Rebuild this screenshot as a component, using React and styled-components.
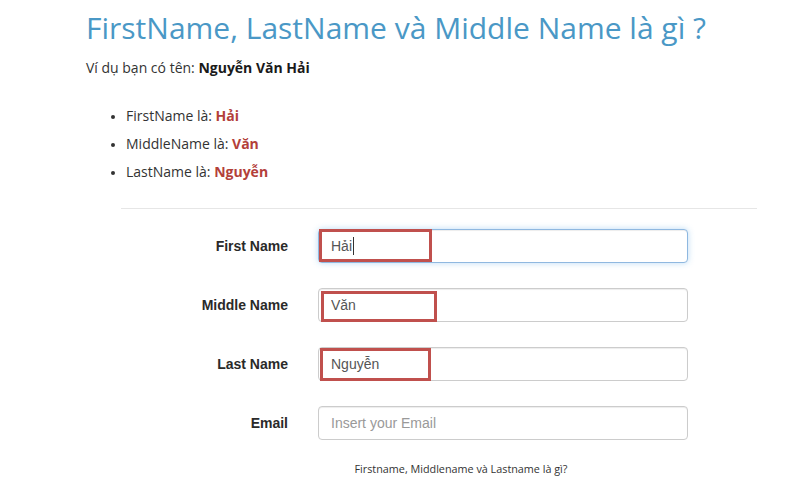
import styled, { createGlobalStyle } from 'styled-components';

const GlobalStyle = createGlobalStyle`
  body {
    margin: 0;
    background: #fff;
    font-family: "Open Sans", "Liberation Sans", sans-serif;
    color: #333;
  }
`;

const fields = [
  { label: 'First Name', value: 'Hải', focused: true, mark: { left: 1, top: 0, width: 113, height: 33 } },
  { label: 'Middle Name', value: 'Văn', mark: { left: 3, top: 3, width: 116, height: 31 } },
  { label: 'Last Name', value: 'Nguyễn', mark: { left: 2, top: 1, width: 111, height: 33 } },
  { label: 'Email', placeholder: 'Insert your Email' }
];

const App = () => {
  return (
    <>
      <GlobalStyle />
      <Page>
        <Title>FirstName, LastName và Middle Name là gì ?</Title>
        <Intro>
          Ví dụ bạn có tên: <strong>Nguyễn Văn Hải</strong>
        </Intro>
        <List>
          <li>FirstName là: <Name>Hải</Name></li>
          <li>MiddleName là: <Name>Văn</Name></li>
          <li>LastName là: <Name>Nguyễn</Name></li>
        </List>
        <Divider />
        <Form>
          {fields.map((f) => (
            <Row key={f.label}>
              <Label>{f.label}</Label>
              <InputWrap>
                <Input
                  $focused={f.focused}
                  defaultValue={f.value}
                  placeholder={f.placeholder}
                  readOnly
                />
                {f.focused && <Caret />}
                {f.mark && (
                  <Mark
                    $left={f.mark.left}
                    $top={f.mark.top}
                    $width={f.mark.width}
                    $height={f.mark.height}
                  />
                )}
              </InputWrap>
            </Row>
          ))}
        </Form>
        <Caption>Firstname, Middlename và Lastname là gì?</Caption>
      </Page>
    </>
  );
};

export default App;

const Page = styled.div`
  width: 800px;
  height: 485px;
  overflow: hidden;
  padding: 10px 0 0 86px;
  box-sizing: border-box;
`;

const Title = styled.h1`
  margin: 0;
  font-size: 30px;
  font-weight: 400;
  line-height: 36px;
  color: #4a98c6;
`;

const Intro = styled.p`
  margin: 12px 0 0;
  font-size: 14px;
  line-height: 20px;

  strong {
    font-weight: 700;
    color: #1a1a1a;
  }
`;

const List = styled.ul`
  margin: 24px 0 0;
  padding-left: 40px;
  font-size: 14px;
  line-height: 28px;

  li::marker {
    font-size: 12px;
  }
`;

const Name = styled.strong`
  color: #b3403a;
  font-weight: 700;
`;

const Divider = styled.hr`
  margin: 22px 0 0 35px;
  width: 636px;
  border: 0;
  border-top: 1px solid #e6e6e6;
`;

const Form = styled.div`
  margin-top: 20px;
  display: flex;
  flex-direction: column;
  gap: 25px;
`;

const Row = styled.div`
  display: grid;
  grid-template-columns: 202px 370px;
  column-gap: 30px;
  align-items: center;
`;

const Label = styled.label`
  text-align: right;
  font-family: "Liberation Sans", Arial, sans-serif;
  font-size: 14px;
  font-weight: 700;
  color: #2a2a2a;
`;

const InputWrap = styled.div`
  position: relative;
`;

const Input = styled.input`
  display: block;
  width: 100%;
  height: 34px;
  box-sizing: border-box;
  padding: 6px 12px;
  font-family: "Liberation Sans", Arial, sans-serif;
  font-size: 14px;
  color: #555;
  background: #fff;
  border: 1px solid ${(p) => (p.$focused ? '#8fb8e0' : '#ccc')};
  border-radius: 4px;
  box-shadow: ${(p) =>
    p.$focused
      ? 'inset 0 1px 1px rgba(0,0,0,.075), 0 0 6px rgba(102,175,233,.45)'
      : 'inset 0 1px 1px rgba(0,0,0,.075)'};
  outline: none;

  &::placeholder {
    color: #999;
  }
`;

const Caret = styled.span`
  position: absolute;
  left: 35px;
  top: 8px;
  width: 1px;
  height: 18px;
  background: #333;
`;

const Mark = styled.div`
  position: absolute;
  left: ${(p) => p.$left}px;
  top: ${(p) => p.$top}px;
  width: ${(p) => p.$width}px;
  height: ${(p) => p.$height}px;
  box-sizing: border-box;
  border: 3px solid #c0504d;
  pointer-events: none;
`;

const Caption = styled.p`
  margin: 21px 0 0;
  width: 750px;
  text-align: center;
  font-size: 10.8px;
  color: #333;
`;
